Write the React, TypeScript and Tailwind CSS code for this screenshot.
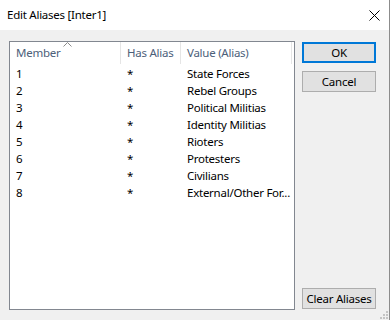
import React from "react";

const rows: [string, string, string][] = [
  ["1", "*", "State Forces"],
  ["2", "*", "Rebel Groups"],
  ["3", "*", "Political Militias"],
  ["4", "*", "Identity Militias"],
  ["5", "*", "Rioters"],
  ["6", "*", "Protesters"],
  ["7", "*", "Civilians"],
  ["8", "*", "External/Other For..."],
];

export default function App() {
  return (
    <div
      className="w-[390px] h-[320px] flex flex-col overflow-hidden text-[11.5px] tracking-[-0.25px] text-black"
      style={{ fontFamily: '"Noto Sans", "Open Sans", sans-serif' }}
    >
      <div className="h-[30px] bg-white flex items-center pl-[7px] border-r border-[#8c8c8c] shrink-0">
        <span className="flex-1 leading-none">Edit Aliases [Inter1]</span>
        <svg width="11" height="11" viewBox="0 0 11 11" className="mr-[9px]">
          <path d="M0.5 0.5 L10.5 10.5 M10.5 0.5 L0.5 10.5" stroke="#000" strokeWidth="1" />
        </svg>
      </div>
      <div className="flex-1 bg-[#f0f0f0] border-r border-[#8c8c8c] flex pl-[9px] pt-[11px] relative">
        <div className="w-[286px] h-[269px] bg-white border border-[#828790] flex flex-col">
          <div className="h-[22px] mb-[1px] flex relative shrink-0">
            <div className="w-[111px] pl-[6px] flex items-center text-[#4c607a] border-r border-[#e5e5e5] whitespace-nowrap">
              Member
            </div>
            <div className="w-[60px] pl-[6px] flex items-center text-[#4c607a] border-r border-[#e5e5e5] whitespace-nowrap">
              Has Alias
            </div>
            <div className="w-[111px] pl-[6px] flex items-center text-[#4c607a] border-r border-[#e5e5e5] whitespace-nowrap">
              Value (Alias)
            </div>
            <svg width="9" height="5" viewBox="0 0 9 5" className="absolute left-[53px] top-[0px]">
              <path d="M0.5 4.5 L4.5 0.5 L8.5 4.5" stroke="#8a8a8a" strokeWidth="1" fill="none" />
            </svg>
          </div>
          {rows.map(([m, h, v]) => (
            <div key={m} className="h-[17px] flex items-center leading-none whitespace-nowrap">
              <div className="w-[111px] pl-[6px]">{m}</div>
              <div className="w-[61px] pl-[6px]">{h}</div>
              <div className="w-[110px] pl-[5px]">{v}</div>
            </div>
          ))}
        </div>
        <div className="ml-[7px] mt-[1px] w-[74px] h-[267px] flex flex-col">
          <button className="h-[21px] w-full bg-[#e1e1e1] border-2 border-[#0078d7] flex items-center justify-center leading-none">
            OK
          </button>
          <button className="mt-[8px] h-[21px] w-full bg-[#e1e1e1] border border-[#adadad] flex items-center justify-center leading-none">
            Cancel
          </button>
          <div className="flex-1" />
          <button className="h-[21px] w-full bg-[#e1e1e1] border border-[#adadad] flex items-center justify-center leading-none">
            Clear Aliases
          </button>
        </div>
        <svg width="8" height="8" viewBox="0 0 8 8" className="absolute right-[1px] bottom-[1px]">
          <rect x="6" y="0" width="2" height="2" fill="#c4c4c4" />
          <rect x="3" y="3" width="2" height="2" fill="#c4c4c4" />
          <rect x="6" y="3" width="2" height="2" fill="#c4c4c4" />
          <rect x="0" y="6" width="2" height="2" fill="#c4c4c4" />
          <rect x="3" y="6" width="2" height="2" fill="#c4c4c4" />
          <rect x="6" y="6" width="2" height="2" fill="#c4c4c4" />
        </svg>
      </div>
    </div>
  );
}
